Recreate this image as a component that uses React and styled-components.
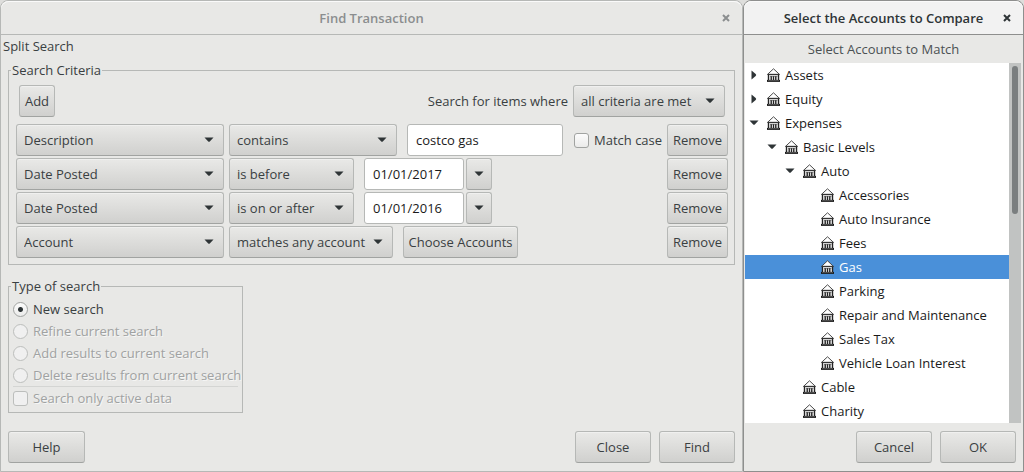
import styled, { createGlobalStyle } from 'styled-components'

const GlobalStyle = createGlobalStyle`
* { box-sizing: border-box; }
body {
    margin: 0;
    background: #dededc;
    color: #3a4042;
    font-family: 'Open Sans', sans-serif;
    font-size: 13px;
    line-height: 18px;
}
button, input, select { font: inherit; color: inherit; margin: 0; }
svg { display: block; }
`
const Desktop = styled.main`
    display: grid;
    grid-template-columns: minmax(0, 1fr) 281px;
    min-height: 100vh;
    padding-bottom: 1px;
`
const Window = styled.section`
    display: flex;
    flex-direction: column;
    background: #e8e8e6;
    border: 1px solid ${p => (p.$active ? '#8e8f8e' : '#b6b8b6')};
    border-radius: 8px 8px 0 0;
`
const TitleBar = styled.header`
    display: grid;
    grid-template-columns: 32px 1fr 32px;
    align-items: center;
    height: 34px;
    border-bottom: 1px solid ${p => (p.$active ? '#8e8f8e' : '#b6b8b6')};
    border-radius: 8px 8px 0 0;
    box-shadow: inset 0 1px #fafafa;
    background: ${p => (p.$active ? '#f2f2f2' : '#e8e8e6')};
    color: ${p => (p.$active ? '#2e3436' : '#8b8e8f')};
`
const Title = styled.h1`
    grid-column: 2;
    margin: 0;
    font-size: 13px;
    font-weight: 600;
    text-align: center;
    white-space: nowrap;
`
const CloseButton = styled.button`
    display: grid;
    place-items: center;
    height: 24px;
    padding: 0;
    border: 0;
    background: none;
`
const Body = styled.div`
    flex: 1;
    display: flex;
    flex-direction: column;
    padding: 0 7px 7px;
`
const Heading = styled.h2`
    margin: 2px -5px 6px;
    font-size: 13px;
    font-weight: 400;
`
const Group = styled.fieldset`
    min-width: 0;
    margin: 0 0 12px;
    padding: ${p => (p.$narrow ? '3px 4px 3px' : '6px 6px 6px 7px')};
    width: ${p => (p.$narrow ? '235px' : 'auto')};
    border: 1px solid #b6b8b6;
`
const Legend = styled.legend`
    margin-left: ${p => (p.$narrow ? '-2px' : '-5px')};
    padding: 0 1px;
`
const Button = styled.button`
    display: grid;
    place-items: center;
    height: 32px;
    width: ${p => p.$width || 'auto'};
    padding: 0;
    border: 1px solid #b6b8b6;
    border-bottom-color: #a1a3a1;
    border-radius: 3px;
    background: linear-gradient(#e9e9e7, #d0d0ce);
    box-shadow: inset 0 1px #f0f0ef;
    white-space: nowrap;
`
const Row = styled.div`
    display: flex;
    align-items: center;
    margin-top: 2px;
    & > ${Button}:last-child { margin-left: auto; }
`
const TopRow = styled.div`
    display: flex;
    align-items: center;
    justify-content: space-between;
    padding: 0 3px;
    margin-bottom: 7px;
`
const Field = styled.div`
    display: flex;
    align-items: center;
    gap: 5px;
`
const Value = styled.div`
    display: flex;
    align-items: center;
    gap: 2px;
    margin-left: 10px;
`
const Combo = styled.span`
    display: grid;
    align-items: center;
    width: ${p => p.$width};
    margin-right: ${p => (p.$spaced ? '5px' : 0)};
    & > * { grid-area: 1 / 1; }
    & > svg { justify-self: end; margin-right: 10px; pointer-events: none; }
`
const Select = styled.select`
    appearance: none;
    width: 100%;
    height: 32px;
    padding: 0 24px 0 7px;
    border: 1px solid #b6b8b6;
    border-bottom-color: #a1a3a1;
    border-radius: 3px;
    background: linear-gradient(#e9e9e7, #d0d0ce);
    box-shadow: inset 0 1px #f0f0ef;
`
const Entry = styled.input`
    width: ${p => p.$width};
    height: 32px;
    padding: 0 8px;
    border: 1px solid #b6b8b6;
    border-radius: 3px;
    background: #fff;
    color: #1a1a1a;
`
const Option = styled.label`
    display: flex;
    align-items: center;
    gap: 5px;
    height: 22px;
    margin-left: ${p => (p.$inline ? '9px' : 0)};
    white-space: nowrap;
    color: ${p => (p.$disabled ? '#a0a2a2' : 'inherit')};
    text-shadow: ${p => (p.$disabled ? '1px 1px #f6f6f5' : 'none')};
`
const Tick = styled.input`
    appearance: none;
    flex: none;
    width: 15px;
    height: 15px;
    border: 1px solid ${p => (p.disabled ? '#bcbebc' : '#a1a3a1')};
    border-radius: ${p => (p.type === 'radio' ? '50%' : '3px')};
    background: ${p => (p.disabled ? '#f0f0f0' : 'linear-gradient(#fcfcfc, #ebebea)')};
    &:checked {
        background: radial-gradient(circle, #2e3436 0 2px, transparent 3px), linear-gradient(#fcfcfc, #ebebea);
    }
`
const Separator = styled.hr`
    width: 100%;
    height: 1px;
    margin: 0;
    border: 0;
    background: #d4d5d3;
`
const Actions = styled.footer`
    display: flex;
    gap: 8px;
    margin-top: auto;
    padding: ${p => (p.$end ? '8px 7px 8px' : '0 0 1px')};
    justify-content: flex-end;
    & > ${Button}:first-child { margin-right: ${p => (p.$end ? 0 : 'auto')}; }
`
const Caption = styled.p`
    margin: 0;
    padding: 5px 0;
    text-align: center;
    color: #4b5153;
`
const TreeView = styled.div`
    flex: 1;
    display: grid;
    grid-template-columns: 1fr 12px;
    margin: 0 2px 0 1px;
`
const Tree = styled.ul`
    margin: 0;
    padding: 0;
    list-style: none;
    background: #fff;
    color: #1a1a1a;
`
const TreeItem = styled.li`
    display: grid;
    grid-template-columns: 10px 16px auto;
    gap: 0 5px;
    justify-items: center;
    justify-content: start;
    align-items: center;
    height: 24px;
    padding-left: ${p => 4 + p.$level * 18}px;
    background: ${p => (p.$selected ? '#4a90d9' : 'transparent')};
    color: ${p => (p.$selected ? '#fff' : 'inherit')};
    white-space: nowrap;
    & > svg { justify-self: end; }
`
const ScrollTrack = styled.div`
    padding: 3px;
    background: #c1c3c2;
`
const ScrollThumb = styled.div`
    height: 148px;
    border-radius: 3px;
    background: #7a7e7f;
`

const Down = () => (
    <svg width="10" height="6" viewBox="0 0 10 6" aria-hidden="true">
        <path d="M.5 .5h9L6 4.3Q5 5.3 4 4.3z" fill="#2e3436" />
    </svg>
)

const Right = () => (
    <svg width="6" height="10" viewBox="0 0 6 10" aria-hidden="true">
        <path d="M.5 .5v9L4.7 6Q5.7 5 4.7 4z" fill="#2e3436" />
    </svg>
)

const Cross = () => (
    <svg width="8" height="8" viewBox="0 0 8 8" aria-hidden="true">
        <path d="M1 1l6 6M7 1L1 7" stroke="currentColor" strokeWidth="2" />
    </svg>
)

const Bank = () => (
    <svg width="13" height="14" viewBox="0 0 13 14" aria-hidden="true">
        <path d="M6.5 .8L12.4 6.3H.6z" fill="#fff" stroke="#4a4a4a" strokeWidth="1" />
        <path d="M1 6h11v6H1z" fill="#fff" />
        <path d="M.5 6.5h12" stroke="#333" />
        <path d="M1.5 7v5M11.5 7v5M4.2 8v4M6.5 8v4M8.8 8v4" stroke="#222" strokeWidth="1.4" />
        <path d="M3 8.2h7.5" stroke="#555" strokeWidth=".8" />
        <path d="M0 12.9h13" stroke="#1a1a1a" strokeWidth="2" />
        <path d="M1 12.6h11" stroke="#8a8a8a" strokeWidth=".5" />
    </svg>
)

const Dropdown = ({ label, value, width, spaced }) => (
    <Combo $width={width} $spaced={spaced}>
        <Select aria-label={label} defaultValue={value}>
            <option>{value}</option>
        </Select>
        <Down />
    </Combo>
)

const DateValue = ({ value }) => (
    <Value>
        <Entry $width="100px" aria-label="Date" defaultValue={value} />
        <Button $width="26px" aria-label="Calendar"><Down /></Button>
    </Value>
)

const criteria = [
    {
        field: 'Description', test: 'contains', width: '168px',
        value: (
            <Value>
                <Entry $width="156px" aria-label="Text" defaultValue="costco gas" />
                <Option $inline><Tick type="checkbox" />Match case</Option>
            </Value>
        )
    },
    { field: 'Date Posted', test: 'is before', width: '125px', value: <DateValue value="01/01/2017" /> },
    { field: 'Date Posted', test: 'is on or after', width: '125px', value: <DateValue value="01/01/2016" /> },
    {
        field: 'Account', test: 'matches any account', width: '164px',
        value: <Value><Button $width="115px">Choose Accounts</Button></Value>
    }
]

const searchTypes = ['New search', 'Refine current search', 'Add results to current search', 'Delete results from current search']

const accounts = [
    { name: 'Assets', level: 0, open: false },
    { name: 'Equity', level: 0, open: false },
    { name: 'Expenses', level: 0, open: true },
    { name: 'Basic Levels', level: 1, open: true },
    { name: 'Auto', level: 2, open: true },
    { name: 'Accessories', level: 3 },
    { name: 'Auto Insurance', level: 3 },
    { name: 'Fees', level: 3 },
    { name: 'Gas', level: 3, selected: true },
    { name: 'Parking', level: 3 },
    { name: 'Repair and Maintenance', level: 3 },
    { name: 'Sales Tax', level: 3 },
    { name: 'Vehicle Loan Interest', level: 3 },
    { name: 'Cable', level: 2 },
    { name: 'Charity', level: 2 }
]

const FindTransaction = () => (
    <Window>
        <TitleBar>
            <Title>Find Transaction</Title>
            <CloseButton aria-label="Close window"><Cross /></CloseButton>
        </TitleBar>
        <Body>
            <Heading>Split Search</Heading>
            <Group>
                <Legend>Search Criteria</Legend>
                <TopRow>
                    <Button $width="36px">Add</Button>
                    <Field>
                        <span>Search for items where</span>
                        <Dropdown label="Search for items where" value="all criteria are met" width="152px" />
                    </Field>
                </TopRow>
                {criteria.map((c, i) => (
                    <Row key={i}>
                        <Dropdown label="Field" value={c.field} width="208px" spaced />
                        <Dropdown label="Condition" value={c.test} width={c.width} />
                        {c.value}
                        <Button $width="61px">Remove</Button>
                    </Row>
                ))}
            </Group>
            <Group $narrow>
                <Legend $narrow>Type of search</Legend>
                {searchTypes.map((type, i) => (
                    <Option key={type} $disabled={i > 0}>
                        <Tick type="radio" name="type" defaultChecked={i === 0} disabled={i > 0} />
                        {type}
                    </Option>
                ))}
                <Separator />
                <Option $disabled><Tick type="checkbox" disabled />Search only active data</Option>
            </Group>
            <Actions>
                <Button $width="77px">Help</Button>
                <Button $width="76px">Close</Button>
                <Button $width="76px">Find</Button>
            </Actions>
        </Body>
    </Window>
)

const SelectAccounts = () => (
    <Window $active>
        <TitleBar $active>
            <Title>Select the Accounts to Compare</Title>
            <CloseButton aria-label="Close window"><Cross /></CloseButton>
        </TitleBar>
        <Caption>Select Accounts to Match</Caption>
        <TreeView>
            <Tree>
                {accounts.map(a => (
                    <TreeItem key={a.name} $level={a.level} $selected={a.selected}>
                        <span>{a.open === undefined ? null : a.open ? <Down /> : <Right />}</span>
                        <Bank />
                        <span>{a.name}</span>
                    </TreeItem>
                ))}
            </Tree>
            <ScrollTrack><ScrollThumb /></ScrollTrack>
        </TreeView>
        <Actions $end>
            <Button $width="76px">Cancel</Button>
            <Button $width="76px">OK</Button>
        </Actions>
    </Window>
)

const App = () => (
    <>
        <GlobalStyle />
        <Desktop>
            <FindTransaction />
            <SelectAccounts />
        </Desktop>
    </>
)

export default App
